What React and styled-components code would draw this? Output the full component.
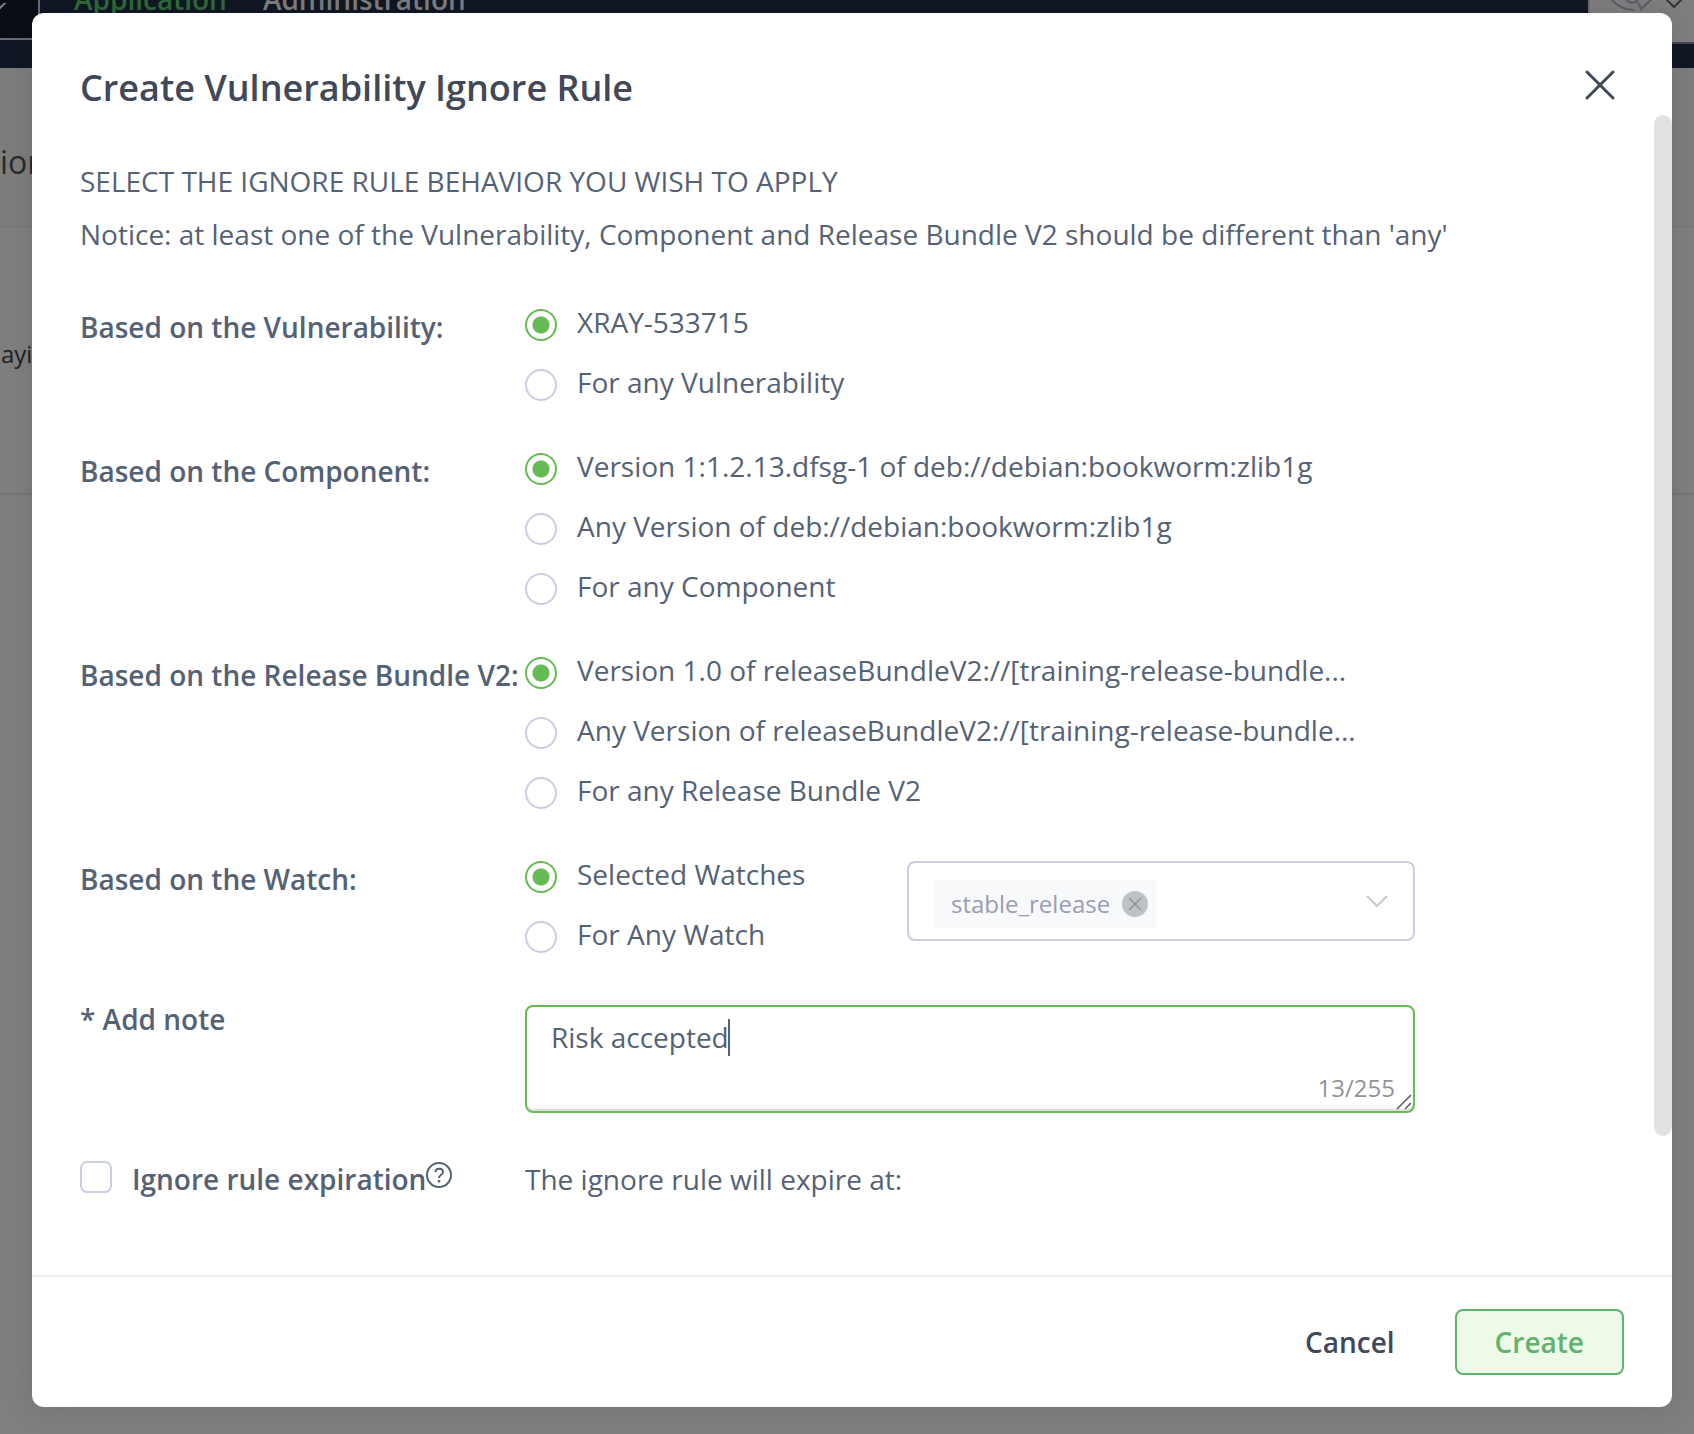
import React, { useState } from 'react';
import styled, { createGlobalStyle } from 'styled-components';

const GlobalStyle = createGlobalStyle`
  * { box-sizing: border-box; }
  body {
    margin: 0;
    background: #7f7f7f;
    font-family: "Open Sans", "Noto Sans", sans-serif;
    color: #556274;
  }
  button, input, textarea, select { font-family: inherit; }
`;

const Page = styled.div`
  position: relative;
  min-height: 100vh;
  overflow: hidden;
`;

const Backdrop = styled.div`
  position: absolute;
  inset: 0;
`;

const TopBar = styled.header`
  display: flex;
  align-items: flex-start;
  height: 68px;
  background: #111825;
`;

const ProductBox = styled.div`
  width: 40px;
  height: 40px;
  background: #0a0e15;
  border-right: 2px solid #6a6b78;
  border-bottom: 2px solid #6a6b78;
  overflow: hidden;
`;

const TopNav = styled.nav`
  display: flex;
  gap: 36px;
  flex: 1;
  height: 28px;
  margin-top: -21px;
  padding-left: 34px;
`;

const TopLink = styled.a`
  font-size: 28px;
  line-height: 40px;
  font-weight: 600;
  text-decoration: none;
  color: ${({ $active }) => ($active ? '#2f6b36' : '#7f7f7f')};
`;

const SearchBox = styled.div`
  display: flex;
  width: 106px;
  height: 44px;
  padding-left: 20px;
  gap: 12px;
  background: #7f7f7f;
  border-left: 2px solid #6b6b70;
  border-bottom: 2px solid #444754;
`;

const PageHeading = styled.div`
  height: 160px;
  padding-top: 72px;
  font-size: 32px;
  line-height: 44px;
  color: #2b2b2d;
  background: #7d7d7d;
  border-bottom: 2px solid #7a7a7a;
`;

const PageSummary = styled.div`
  height: 267px;
  padding: 109px 0 0 1px;
  font-size: 24px;
  line-height: 34px;
  color: #1f2023;
  border-bottom: 2px solid #757575;
`;

const Modal = styled.section`
  position: relative;
  display: flex;
  flex-direction: column;
  margin: 13px 22px 27px 32px;
  background: #fff;
  border-radius: 12px;
  box-shadow: 0 0 32px rgba(0, 0, 0, 0.12);
`;

const ModalHeader = styled.div`
  display: flex;
  justify-content: space-between;
  align-items: flex-start;
  padding: 50px 50px 0 48px;
`;

const Title = styled.h1`
  margin: 0;
  font-size: 36px;
  line-height: 50px;
  font-weight: 600;
  color: #414857;
`;

const CloseButton = styled.button`
  display: flex;
  padding: 0;
  margin-top: 2px;
  border: 0;
  background: none;
  color: #414857;
`;

const Scrollbar = styled.div`
  position: absolute;
  top: 102px;
  right: 0;
  width: 18px;
  height: 1021px;
  border-radius: 9px;
  background: #e2e2e2;
`;

const ModalBody = styled.form`
  padding: 48px 48px 76px;
`;

const Intro = styled.p`
  margin: 0 0 13px;
  font-size: 28px;
  line-height: 40px;
`;

const Field = styled.div`
  display: grid;
  grid-template-columns: 445px minmax(0, 890px);
  margin-top: ${({ $gap }) => $gap}px;
`;

const Label = styled.label`
  font-size: 28px;
  line-height: 40px;
  font-weight: 600;
  white-space: nowrap;
`;

const GroupLabel = styled(Label)`
  padding-top: 5px;
`;

const Options = styled.div`
  display: flex;
  flex-direction: column;
  gap: 20px;
`;

const Option = styled.label`
  display: flex;
  gap: 20px;
  height: 40px;
  font-size: 28px;
  line-height: 40px;
`;

const OptionText = styled.span`
  white-space: nowrap;
`;

const Radio = styled.input`
  appearance: none;
  flex: none;
  width: 32px;
  height: 32px;
  margin: 7px 0 0;
  border: 2px solid #cacee3;
  border-radius: 50%;
  background: #fff;
  &:checked {
    border-color: #66bb55;
    background: radial-gradient(circle, #66bb55 8px, #fff 9px);
  }
`;

const WatchRow = styled.div`
  display: flex;
  justify-content: space-between;
  align-items: flex-start;
`;

const WatchBox = styled.div`
  display: flex;
  align-items: center;
  width: 508px;
  height: 80px;
  margin-top: 7px;
  padding: 0 25px 0 26px;
  border: 2px solid #cacee3;
  border-radius: 8px;
`;

const WatchSelect = styled.select`
  appearance: none;
  flex: 1;
  min-width: 0;
  height: 48px;
  border: 0;
  outline: none;
  background: transparent;
`;

const Chip = styled.span`
  display: flex;
  align-items: center;
  gap: 12px;
  height: 48px;
  margin-top: 6px;
  padding: 0 8px 0 16px;
  font-size: 24px;
  line-height: 34px;
  color: #9a9cb4;
  background: #f8f9fb;
`;

const IconButton = styled.button`
  display: flex;
  padding: 0;
  border: 0;
  background: none;
`;

const NoteBox = styled.div`
  position: relative;
  display: flex;
  margin-top: 6px;
`;

const Note = styled.textarea`
  width: 100%;
  height: 108px;
  padding: 10px 24px;
  border: 2px solid #66bb55;
  border-radius: 8px;
  box-shadow: inset 0 -2px 0 #dcdcdc;
  outline: none;
  resize: none;
  font-size: 28px;
  line-height: 40px;
  color: #556274;
`;

const Caret = styled.span`
  position: absolute;
  left: 203px;
  top: 14px;
  width: 2px;
  height: 37px;
  background: #556274;
`;

const Counter = styled.span`
  position: absolute;
  right: 20px;
  bottom: 8px;
  font-size: 24px;
  line-height: 34px;
  color: #929398;
`;

const Grip = styled.svg`
  position: absolute;
  right: 3px;
  bottom: 3px;
`;

const CheckLabel = styled.div`
  display: flex;
  align-items: flex-start;
`;

const Checkbox = styled.input`
  appearance: none;
  width: 32px;
  height: 32px;
  margin: 2px 20px 0 0;
  border: 2px solid #cacee3;
  border-radius: 7px;
  background: #fff;
`;

const Hint = styled.span`
  font-size: 28px;
  line-height: 40px;
`;

const HelpButton = styled(IconButton)`
  margin-top: 2px;
`;

const Footer = styled.footer`
  display: flex;
  justify-content: flex-end;
  gap: 28px;
  padding: 32px 48px;
  border-top: 2px solid #f0f0f0;
`;

const Button = styled.button`
  height: 66px;
  padding: 0 ${({ $primary }) => ($primary ? 38 : 30)}px;
  font-size: 28px;
  line-height: 40px;
  font-weight: 600;
  border: 2px solid ${({ $primary }) => ($primary ? '#60b26c' : 'transparent')};
  border-radius: 8px;
  color: ${({ $primary }) => ($primary ? '#60b26c' : '#414857')};
  background: ${({ $primary }) => ($primary ? '#eefae9' : 'transparent')};
`;

const RADIO_GROUPS = [
  {
    name: 'vulnerability',
    label: 'Based on the Vulnerability:',
    options: ['XRAY-533715', 'For any Vulnerability'],
  },
  {
    name: 'component',
    label: 'Based on the Component:',
    options: [
      'Version 1:1.2.13.dfsg-1 of deb://debian:bookworm:zlib1g',
      'Any Version of deb://debian:bookworm:zlib1g',
      'For any Component',
    ],
  },
  {
    name: 'bundle',
    label: 'Based on the Release Bundle V2:',
    options: [
      'Version 1.0 of releaseBundleV2://[training-release-bundle...',
      'Any Version of releaseBundleV2://[training-release-bundle...',
      'For any Release Bundle V2',
    ],
  },
];

function RadioGroup({ name, labelId, options }) {
  return (
    <Options role="radiogroup" aria-labelledby={labelId}>
      {options.map((text, index) => (
        <Option key={text}>
          <Radio type="radio" name={name} defaultChecked={index === 0} />
          <OptionText>{text}</OptionText>
        </Option>
      ))}
    </Options>
  );
}

export default function App() {
  const [note, setNote] = useState('Risk accepted');
  return (
    <>
      <GlobalStyle />
      <Page>
        <Backdrop>
          <TopBar>
            <ProductBox>
              <svg width="14" height="14" viewBox="0 0 14 14" fill="none" stroke="#7f7f7f" strokeWidth="2">
                <path d="M-2 7 L7 -2" />
              </svg>
            </ProductBox>
            <TopNav>
              <TopLink href="#application" $active>Application</TopLink>
              <TopLink href="#administration">Administration</TopLink>
            </TopNav>
            <SearchBox>
              <svg width="44" height="14" viewBox="0 0 44 14" fill="none" stroke="#5b5d69" strokeWidth="2">
                <path d="M1 -1 C7 6 14 10 24 10" />
                <path d="M17 -1 C18 4 26 4 28 -1" />
                <path d="M26 1 L29 4 L31 9 L42 -1" />
              </svg>
              <svg width="18" height="10" viewBox="0 0 18 10" fill="none" stroke="#34363d" strokeWidth="2">
                <path d="M0 -1 L8 7 L16 -1" />
              </svg>
            </SearchBox>
          </TopBar>
          <PageHeading>ion</PageHeading>
          <PageSummary>aying</PageSummary>
        </Backdrop>

        <Modal role="dialog" aria-labelledby="dialog-title">
          <ModalHeader>
            <Title id="dialog-title">Create Vulnerability Ignore Rule</Title>
            <CloseButton type="button" aria-label="Close">
              <svg width="44" height="44" viewBox="0 0 44 44" fill="none" stroke="currentColor" strokeWidth="3" strokeLinecap="round">
                <path d="M9 7 L35 33 M35 7 L9 33" />
              </svg>
            </CloseButton>
          </ModalHeader>
          <Scrollbar />

          <ModalBody>
            <Intro>SELECT THE IGNORE RULE BEHAVIOR YOU WISH TO APPLY</Intro>
            <Intro>
              Notice: at least one of the Vulnerability, Component and Release Bundle V2 should be different than 'any'
            </Intro>

            {RADIO_GROUPS.map((group, index) => (
              <Field key={group.name} $gap={index === 0 ? 48 : 44}>
                <GroupLabel as="span" id={`${group.name}-label`}>{group.label}</GroupLabel>
                <RadioGroup name={group.name} labelId={`${group.name}-label`} options={group.options} />
              </Field>
            ))}

            <Field $gap={44}>
              <GroupLabel as="span" id="watch-label">Based on the Watch:</GroupLabel>
              <WatchRow>
                <RadioGroup name="watch" labelId="watch-label" options={['Selected Watches', 'For Any Watch']} />
                <WatchBox>
                  <Chip>
                    stable_release
                    <IconButton type="button" aria-label="Remove stable_release">
                      <svg width="26" height="26" viewBox="0 0 26 26" fill="none">
                        <circle cx="13" cy="13" r="13" fill="#bfc1c8" />
                        <path d="M7 7 L19 19 M19 7 L7 19" stroke="#909196" strokeWidth="1.5" />
                      </svg>
                    </IconButton>
                  </Chip>
                  <WatchSelect aria-label="Add a watch" disabled>
                    <option value="" />
                  </WatchSelect>
                  <svg width="22" height="14" viewBox="0 0 22 14" fill="none" stroke="#c6c8d0" strokeWidth="2">
                    <path d="M1 2 L11 12 L21 2" />
                  </svg>
                </WatchBox>
              </WatchRow>
            </Field>

            <Field $gap={45}>
              <Label htmlFor="note">* Add note</Label>
              <NoteBox>
                <Note id="note" value={note} onChange={(event) => setNote(event.target.value)} maxLength={255} />
                <Caret />
                <Counter>{note.length}/255</Counter>
                <Grip width="16" height="16" viewBox="0 0 16 16" fill="none" stroke="#55565c" strokeWidth="1.5">
                  <path d="M1 15 L15 1 M9 15 L15 9" />
                </Grip>
              </NoteBox>
            </Field>

            <Field $gap={46}>
              <CheckLabel>
                <Checkbox type="checkbox" id="expiration" />
                <Label htmlFor="expiration">Ignore rule expiration</Label>
                <HelpButton type="button" aria-label="About expiration">
                  <svg width="28" height="28" viewBox="0 0 28 28" fill="none" stroke="#556274" strokeWidth="2">
                    <circle cx="13" cy="14" r="12" />
                    <path d="M9.5 11 C9.5 6.5 17 6.5 17 11 C17 14 13 13.5 13 17" />
                    <path d="M13 19 V21.5" strokeWidth="2.5" />
                  </svg>
                </HelpButton>
              </CheckLabel>
              <Hint>The ignore rule will expire at:</Hint>
            </Field>
          </ModalBody>

          <Footer>
            <Button type="button">Cancel</Button>
            <Button type="button" $primary>Create</Button>
          </Footer>
        </Modal>
      </Page>
    </>
  );
}
